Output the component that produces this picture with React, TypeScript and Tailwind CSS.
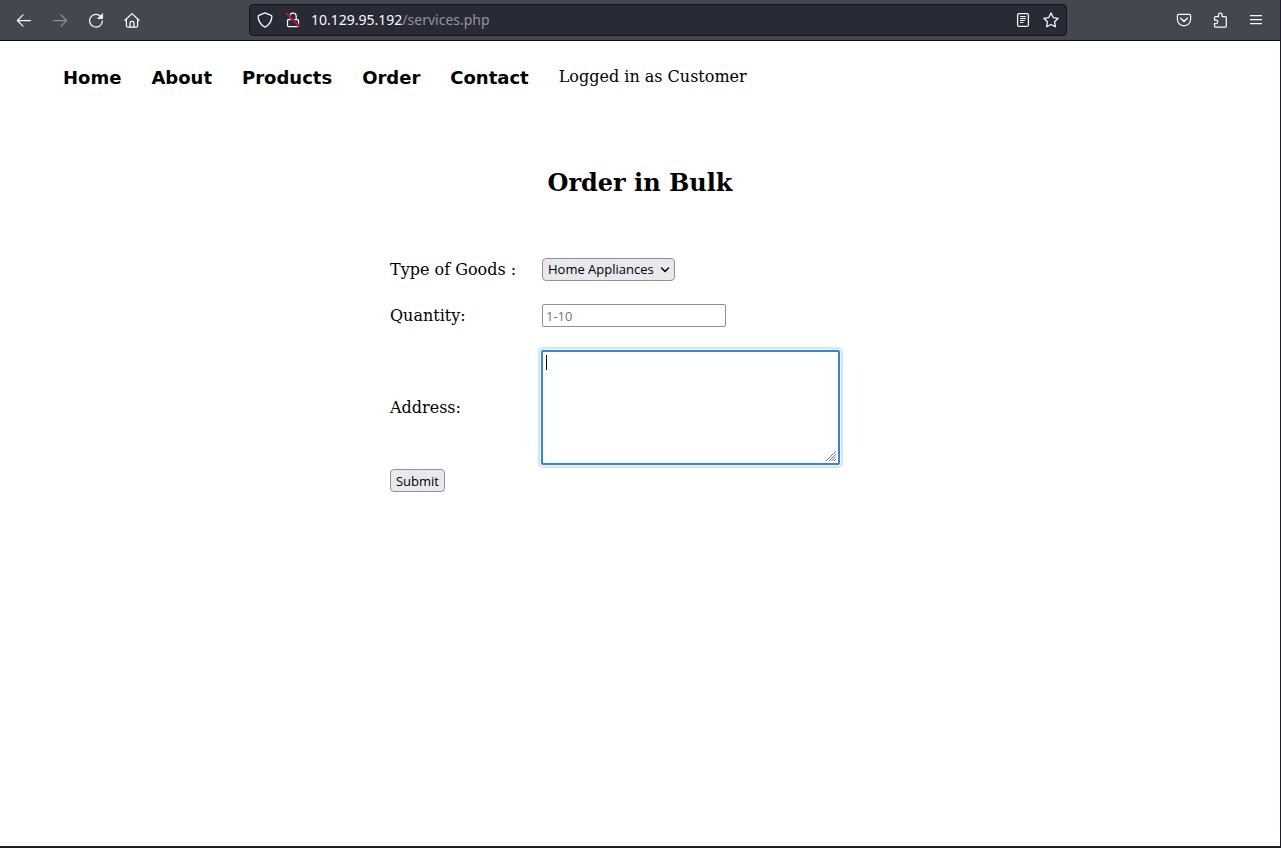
import type { ReactNode } from "react";

function Icon({ children }: { children: ReactNode }) {
  return (
    <svg
      className="size-4 shrink-0"
      viewBox="0 0 16 16"
      fill="none"
      stroke="currentColor"
      strokeWidth="1.25"
      strokeLinecap="round"
      strokeLinejoin="round"
      aria-hidden="true"
    >
      {children}
    </svg>
  );
}

function ToolButton({ label, disabled, children }: { label: string; disabled?: boolean; children: ReactNode }) {
  return (
    <button
      type="button"
      aria-label={label}
      disabled={disabled}
      className="flex size-8 items-center justify-center rounded text-[#fbfbfe] disabled:opacity-40"
    >
      <Icon>{children}</Icon>
    </button>
  );
}

function BrowserBar() {
  return (
    <header className="flex h-[41px] items-center justify-between border-b border-[#0c0c0d] bg-[#44474f] px-2">
      <div className="flex gap-1">
        <ToolButton label="Back">
          <path d="M14.5 8.5H1.7M7 2.9 1.4 8.5 7 14.1" />
        </ToolButton>
        <ToolButton label="Forward" disabled>
          <path d="M1.5 8.5h12.8M9 2.9l5.6 5.6L9 14.1" />
        </ToolButton>
        <ToolButton label="Reload">
          <path d="M12.6 4.2A6.4 6.4 0 1 0 14.4 9" />
          <path d="M14.6 2v4.6H10z" fill="currentColor" strokeWidth="0.8" />
        </ToolButton>
        <ToolButton label="Home">
          <path d="M.9 8.2 8 1.6l7.1 6.6M2.4 7v6.8c0 .7.5 1.2 1.2 1.2h8.8c.7 0 1.2-.5 1.2-1.2V7" />
          <path d="M6.1 15v-4.2c0-.9.6-1.5 1.5-1.5h.8c.9 0 1.5.6 1.5 1.5V15" />
        </ToolButton>
      </div>

      <div className="flex h-8 w-[818px] items-center rounded border border-[#14141a] bg-[#282a36] px-[7px] text-[#fbfbfe]">
        <button type="button" aria-label="Tracking protection">
          <Icon>
            <path d="M8 .9 14.1 3.3c.5.2.8.6.8 1.1C14.7 9.3 12.5 12.8 8 15.2 3.5 12.8 1.3 9.3 1.1 4.4c0-.5.3-.9.8-1.1z" />
          </Icon>
        </button>
        <button type="button" aria-label="Connection not secure" className="ml-3">
          <Icon>
            <path d="M4.8 7.5V4.4a3.2 3.2 0 0 1 6.4 0v3.1M3.5 7.5h9c.6 0 1 .4 1 1v5c0 .6-.4 1-1 1h-9c-.6 0-1-.4-1-1v-5c0-.6.4-1 1-1z" />
            <path d="M1.5 1.5 14.5 14.5" stroke="#282a36" strokeWidth="2.6" />
            <path d="M1.5 1.5 14.5 14.5" stroke="#f0063b" strokeWidth="1.6" />
          </Icon>
        </button>
        <div
          role="textbox"
          aria-label="Address bar"
          tabIndex={0}
          className="ml-2.5 min-w-0 flex-1 truncate font-['Noto_Sans',sans-serif] text-[14px] leading-5"
        >
          10.129.95.192<span className="text-[#93949a]">/services.php</span>
        </div>
        <button type="button" aria-label="Reader view">
          <Icon>
            <rect x="2.6" y="1.6" width="10.8" height="12.8" rx="1.5" />
            <path d="M5.5 4.5h5M5.5 6.5h5M5.5 8.5h4M5.5 10.5h2.5" strokeWidth="1" />
          </Icon>
        </button>
        <button type="button" aria-label="Bookmark this page" className="ml-3">
          <Icon>
            <path d="m8 .9 2.2 4.7 5 .7-3.6 3.5.8 5L8 12.500l-4.400 2.300.8-5L.8 6.300l5-.7z" />
          </Icon>
        </button>
      </div>

      <div className="flex gap-1">
        <ToolButton label="Save to Pocket">
          <path d="M2.6 2.3h10.8c.7 0 1.2.5 1.2 1.2v3.700a6.600 6.600 0 0 1-13.200 0V3.500c0-.7.5-1.200 1.200-1.200z" />
          <path d="M4.7 6.3 8 9.5l3.300-3.200" strokeWidth="1.5" />
        </ToolButton>
        <ToolButton label="Extensions">
          <path d="M2.5 8V5.500c0-.6.400-1 1-1h3V2.800a1.800 1.800 0 0 1 3.600 0v1.700h3.200c.6 0 1 .4 1 1v8.500c0 .6-.4 1-1 1H3.500c-.6 0-1-.4-1-1v-2.500H4a1.750 1.750 0 0 0 0-3.500z" />
        </ToolButton>
        <ToolButton label="Application menu">
          <path d="M2.5 3.500h11M2.500 7.500h11M2.500 11.500h11" />
        </ToolButton>
      </div>
    </header>
  );
}

const links = ["Home", "About", "Products", "Order", "Contact"];

export default function App() {
  return (
    <div className="flex min-h-screen flex-col border-r border-b-2 border-[#1e1c2b] bg-white font-['DejaVu_Serif',serif] text-base text-black">
      <BrowserBar />
      <nav className="flex items-start gap-[30px] px-[63px] pt-6">
        {links.map((name) => (
          <a key={name} href="#" className="font-['DejaVu_Sans',sans-serif] text-lg leading-[26px] font-bold">
            {name}
          </a>
        ))}
        <span className="leading-6">Logged in as Customer</span>
      </nav>

      <main className="mx-auto w-full max-w-[500px] pt-[78px]">
        <h1 className="text-center text-2xl leading-7 font-bold">Order in Bulk</h1>
        <form className="pt-[61px]" onSubmit={(e) => e.preventDefault()}>
          <div className="grid grid-cols-[152px_1fr] items-center gap-y-[23px]">
            <label htmlFor="goods" className="leading-5">Type of Goods :</label>
            <div className="relative w-[133px]">
              <select
                id="goods"
                className="block h-[23px] w-full appearance-none rounded border border-[#8f8f9d] bg-[#e9e9ed] pl-[5px] font-['Open_Sans',sans-serif] text-[13px]"
              >
                <option>Home Appliances</option>
              </select>
              <svg
                className="pointer-events-none absolute top-2 right-[5px] h-2 w-[10px]"
                viewBox="0 0 10 8"
                fill="none"
                stroke="currentColor"
                strokeWidth="1.5"
                strokeLinecap="round"
                aria-hidden="true"
              >
                <path d="M1.5 2 5 5.5 8.5 2" />
              </svg>
            </div>

            <label htmlFor="quantity" className="leading-5">Quantity:</label>
            <input
              id="quantity"
              type="text"
              placeholder="1-10"
              className="h-[23px] w-[184px] rounded-xs border border-[#8f8f9d] px-[3px] font-['Open_Sans',sans-serif] text-[13px] placeholder:text-[#757575]"
            />

            <label htmlFor="address" className="leading-5">Address:</label>
            <div className="relative -ml-px w-[299px]">
              <textarea
                id="address"
                className="block h-[115px] w-full resize-none rounded-xs border-2 border-[#3584e4] px-1 py-0.5 font-['Open_Sans',sans-serif] text-[13px] caret-transparent outline-2 outline-offset-1 outline-[#cce6ff]"
              />
              <span className="pointer-events-none absolute top-[5px] left-[5px] h-[15px] w-px bg-black" />
              <svg
                className="pointer-events-none absolute right-1 bottom-1 size-[10px]"
                viewBox="0 0 10 10"
                stroke="#77777f"
                strokeWidth="1"
                aria-hidden="true"
              >
                <path d="M0 10 10 0M3 10l7-7M5.5 10 10 5.5M8 10l2-2" />
              </svg>
            </div>
          </div>
          <button
            type="submit"
            className="mt-1 block h-[23px] w-[55px] rounded border border-[#8f8f9d] bg-[#e9e9ed] text-center font-['Open_Sans',sans-serif] text-[13px] leading-5"
          >
            Submit
          </button>
        </form>
      </main>
    </div>
  );
}
